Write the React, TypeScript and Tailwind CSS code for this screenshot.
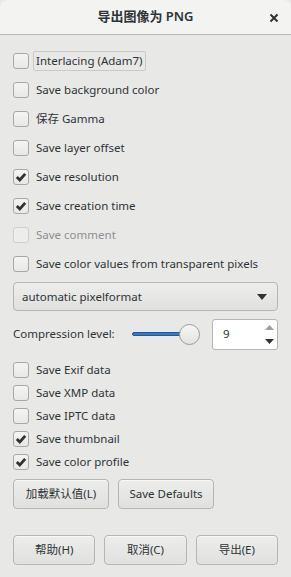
import React from "react";

const Check = ({ checked, disabled }: { checked?: boolean; disabled?: boolean }) => (
  <span
    className={`flex h-[16px] w-[16px] shrink-0 items-center justify-center rounded-[3px] border ${
      disabled ? "border-[#cfcfcd] bg-[#ededec]" : "border-[#a8a8a6] bg-gradient-to-b from-[#f4f4f3] to-[#e8e8e7]"
    }`}
  >
    {checked && (
      <svg width="12" height="12" viewBox="0 0 12 12">
        <path d="M1.8 6 L4.8 9 L10.2 2.8" fill="none" stroke="#2e3436" strokeWidth="2.8" strokeLinecap="butt" strokeLinejoin="miter" />
      </svg>
    )}
  </span>
);

const Row = ({
  label,
  checked,
  disabled,
  focus,
  h,
}: {
  label: string;
  checked?: boolean;
  disabled?: boolean;
  focus?: boolean;
  h: string;
}) => (
  <div className={`flex items-center ${h}`}>
    <Check checked={checked} disabled={disabled} />
    <span
      className={`ml-[4px] px-[2px] leading-[18px] ${
        focus ? "rounded-[2px] border border-[#c9c9c7]" : "border border-transparent"
      } ${disabled ? "text-[#8d9091]" : "text-[#2e3436]"}`}
    >
      {label}
    </span>
  </div>
);

const Btn = ({ children, w }: { children: React.ReactNode; w: string }) => (
  <div
    className={`flex h-[30px] ${w} items-center justify-center rounded-[4px] border border-[#b6b6b3] bg-gradient-to-b from-[#ededec] to-[#e0e0de] text-[#2e3436] shadow-[inset_0_1px_0_#f8f8f7]`}
  >
    {children}
  </div>
);

export default function App() {
  return (
    <div
      className="h-[577px] w-[291px] overflow-hidden bg-[#e8e8e7] text-[11.5px]"
      style={{ fontFamily: '"Noto Sans", "Noto Sans CJK SC", sans-serif' }}
    >
      <div className="relative flex h-[35px] items-center justify-center rounded-t-[7px] border-b border-[#b6b6b3] bg-[#f3f3f2]">
        <span className="text-[13px] font-semibold text-[#2e3436]">导出图像为 PNG</span>
        <svg className="absolute right-[12px] top-[13px]" width="10" height="10" viewBox="0 0 10 10">
          <path d="M1.5 1.5 L8.5 8.5 M8.5 1.5 L1.5 8.5" stroke="#2e3436" strokeWidth="2" />
        </svg>
      </div>
      <div className="flex flex-col px-[13px] pt-[16px]">
        <Row h="h-[20px]" label="Interlacing (Adam7)" focus />
        <div className="h-[9px]" />
        <Row h="h-[20px]" label="Save background color" />
        <div className="h-[9px]" />
        <Row h="h-[20px]" label="保存 Gamma" />
        <div className="h-[9px]" />
        <Row h="h-[20px]" label="Save layer offset" />
        <div className="h-[9px]" />
        <Row h="h-[20px]" label="Save resolution" checked />
        <div className="h-[9px]" />
        <Row h="h-[20px]" label="Save creation time" checked />
        <div className="h-[9px]" />
        <Row h="h-[20px]" label="Save comment" disabled />
        <div className="h-[9px]" />
        <Row h="h-[20px]" label="Save color values from transparent pixels" />
        <div className="mt-[8px] flex h-[29px] items-center justify-between rounded-[4px] border border-[#b6b6b3] bg-gradient-to-b from-[#ededec] to-[#e0e0de] pl-[8px] pr-[10px] text-[#2e3436]">
          <span>automatic pixelformat</span>
          <svg width="10" height="6" viewBox="0 0 10 6">
            <path d="M0 0 H10 L5 6 Z" fill="#2e3436" />
          </svg>
        </div>
        <div className="mt-[7px] flex h-[32px] items-center">
          <span className="w-[119px] text-[#2e3436]">Compression level:</span>
          <div className="relative flex h-[22px] w-[80px] items-center">
            <div className="h-[4px] w-[60px] rounded-[2px] border border-[#1f5a92] bg-[#3b78c0]" />
            <div className="absolute left-[47px] h-[21px] w-[21px] rounded-full border border-[#9a9a98] bg-gradient-to-b from-[#f6f6f5] to-[#e3e3e1]" />
          </div>
          <div className="ml-auto flex h-[31px] w-[66px] items-stretch rounded-[3px] border border-[#b6b6b3] bg-white">
            <span className="flex flex-1 items-center pl-[10px] text-[#2e3436]">9</span>
            <div className="flex w-[16px] flex-col items-center justify-between py-[5px]">
              <svg width="9" height="5" viewBox="0 0 9 5">
                <path d="M0 5 H9 L4.5 0 Z" fill="#a0a0a0" />
              </svg>
              <svg width="9" height="5" viewBox="0 0 9 5">
                <path d="M0 0 H9 L4.5 5 Z" fill="#2e3436" />
              </svg>
            </div>
          </div>
        </div>
        <div className="mt-[8px] flex flex-col">
          <Row h="h-[23px]" label="Save Exif data" />
          <Row h="h-[23px]" label="Save XMP data" />
          <Row h="h-[23px]" label="Save IPTC data" />
          <Row h="h-[23px]" label="Save thumbnail" checked />
          <Row h="h-[23px]" label="Save color profile" checked />
        </div>
        <div className="mt-[6px] flex gap-[9px]">
          <Btn w="w-[96px]">加载默认值(L)</Btn>
          <Btn w="w-[96px]">Save Defaults</Btn>
        </div>
        <div className="mt-[26px] flex gap-[9px]">
          <Btn w="w-[83px]">帮助(H)</Btn>
          <Btn w="w-[83px]">取消(C)</Btn>
          <Btn w="w-[83px]">导出(E)</Btn>
        </div>
      </div>
    </div>
  );
}
